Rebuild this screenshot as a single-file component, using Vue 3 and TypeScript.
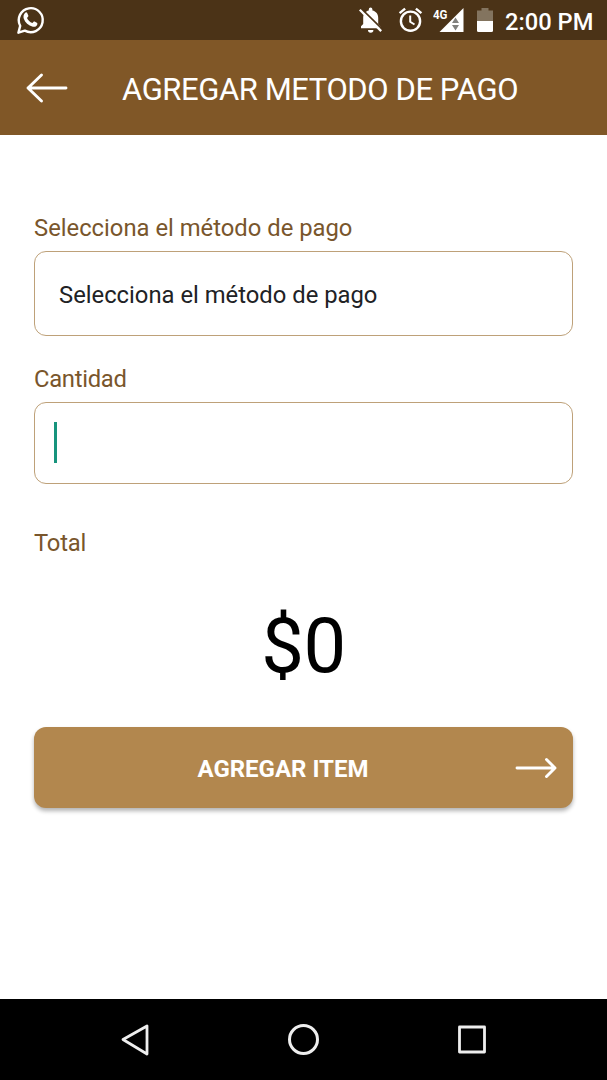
<script setup lang="ts">
import { ref } from 'vue'

const method = ref<string>('Selecciona el método de pago')
const total = ref<number>(0)
const time = '2:00 PM'
</script>

<template>
  <div class="screen">
    <div class="status">
      <svg class="whatsapp" width="30" height="32" viewBox="0 0.7 30 32" fill="none">
        <path d="M3.400 29.400 5.200 22.600A12 12 0 1 1 9.800 27.300Z" stroke="#fff" stroke-width="2.400" stroke-linejoin="round" />
        <path d="M10 9.600c.8-.8 1.800-.7 2.200.2l1.100 2.500c.2.500 0 1-1.300 2.500 1.200 2.400 2.900 4 5.300 5 1.400-1.700 1.800-1.900 2.300-1.600l2.200 1.300c.7.400.7 1.200.3 2.100-.7 1.500-2.600 2.200-4.300 1.800-4.400-1.100-7.700-4.100-9-8-.7-2.200-.2-4.500 1.200-5.800Z" fill="#fff" />
      </svg>
      <svg class="bell" width="26" height="28" viewBox="0 0 26 28">
        <path d="M3 22.300V20.300l2.200-2.200V12c0-4.200 2.300-6.800 5.600-7.500V3.300a1.800 1.800 0 0 1 3.600 0v1.200c3.600.7 5.800 3.600 5.800 7.500v6.100l2.200 2.200v2Z" fill="#fff" />
        <path d="M10 24h5.400a2.700 2.700 0 0 1-5.400 0Z" fill="#fff" />
        <path d="m2.700 2.100 22 21.500" stroke="#4b3317" stroke-width="2" />
        <path d="m1.800 3.700 21.400 21.400" stroke="#fff" stroke-width="2.300" />
      </svg>
      <svg class="alarm" width="26" height="28" viewBox="0 0 26 28" fill="none" stroke="#fff">
        <circle cx="12.500" cy="15.200" r="9.600" stroke-width="2.400" />
        <path d="m1.600 7.200 5.500-4.600M23.400 7.200l-5.500-4.600" stroke-width="2.400" />
        <path d="M12.200 9.500v6.300l4.300 2.700" stroke-width="2" />
      </svg>
      <svg class="signal" width="32" height="28" viewBox="0 0 32 28">
        <path d="M30.500 2V26H6.500Z" fill="#fff" />
        <path d="m22.500 11.500 3.500 5.500h-7ZM22.500 24.500l-3.500-5.500h7Z" fill="#81817e" />
        <text x="0" y="12.500" class="network" textLength="14.500" lengthAdjust="spacingAndGlyphs">4G</text>
      </svg>
      <svg class="battery" width="18" height="28" viewBox="0 0 18 28">
        <path d="M1 4.500h4.500V2h7v2.500H17V15H1Z" fill="#83745f" />
        <path d="M1 15h16v9.500q0 1.500-1.500 1.500h-13Q1 26 1 24.500Z" fill="#fff" />
      </svg>
      <span class="time">{{ time }}</span>
    </div>
    <header class="header">
      <svg class="back" width="44" height="32" viewBox="0 0 44 32" fill="none" stroke="#fff" stroke-width="2.900" stroke-linecap="round" stroke-linejoin="round">
        <path d="M41 16H3M16.500 3 3 16l13.500 13" />
      </svg>
      <h1 class="title">AGREGAR METODO DE PAGO</h1>
    </header>
    <main class="content">
      <div class="label">Selecciona el método de pago</div>
      <div class="field select">{{ method }}</div>
      <div class="label amount-label">Cantidad</div>
      <div class="field amount"><span class="caret"></span></div>
      <div class="label total-label">Total</div>
      <div class="total">${{ total }}</div>
      <button class="submit" type="button">
        <span class="submit-text">AGREGAR ITEM</span>
        <svg width="44" height="24" viewBox="0 0 44 24" fill="none" stroke="#fff" stroke-width="2.900" stroke-linecap="round" stroke-linejoin="round">
          <path d="M3 12h38M32.500 3.500 41 12l-8.500 8.500" />
        </svg>
      </button>
    </main>
    <nav class="nav">
      <svg width="32" height="36" viewBox="0 0 32 36" fill="none" stroke="#eee" stroke-width="2.800" stroke-linejoin="round">
        <path d="M28 4v28L4 17.500Z" />
      </svg>
      <svg width="36" height="36" viewBox="0 0 36 36" fill="none" stroke="#eee" stroke-width="3">
        <circle cx="17.500" cy="17.500" r="14" />
      </svg>
      <svg width="32" height="36" viewBox="0 0 32 36" fill="none" stroke="#eee" stroke-width="2.800" stroke-linejoin="round">
        <path d="M3.500 5h25v25h-25Z" />
      </svg>
    </nav>
  </div>
</template>

<style>
body {
  margin: 0;
}
</style>

<style scoped>
.screen {
  width: 607px;
  height: 1080px;
  display: flex;
  flex-direction: column;
  background: #fff;
  font-family: Roboto, sans-serif;
  overflow: hidden;
}
.screen svg {
  display: block;
  flex: none;
}
.status {
  height: 40px;
  flex: none;
  box-sizing: border-box;
  display: flex;
  align-items: center;
  padding-left: 15px;
  background: #4b3317;
}
.bell {
  margin-left: 313px;
}
.alarm {
  margin-left: 14px;
}
.signal {
  margin-left: 9px;
}
.network {
  font: 700 13px Roboto, sans-serif;
  fill: #fff;
}
.battery {
  margin-left: 11px;
}
.time {
  margin: 3px 0 0 11px;
  color: #fff;
  font-size: 23.700px;
  font-weight: 500;
  line-height: 30px;
  white-space: nowrap;
}
.header {
  height: 95px;
  flex: none;
  display: flex;
  align-items: center;
  padding-left: 25px;
  background: #805727;
}
.title {
  margin: 4px 0 0 53px;
  color: #fff;
  font-size: 31px;
  font-weight: 400;
  line-height: 40px;
  letter-spacing: -0.420px;
  white-space: nowrap;
}
.content {
  flex: 1;
  padding: 78px 34px 0;
}
.label {
  height: 30px;
  color: #79562c;
  font-size: 23.800px;
  line-height: 30px;
  white-space: nowrap;
}
.field {
  box-sizing: border-box;
  margin-top: 8px;
  border: 1px solid #bea179;
  border-radius: 12px;
  display: flex;
  align-items: center;
}
.select {
  height: 85px;
  padding: 2px 0 0 24px;
  color: #212225;
  font-size: 23.800px;
}
.amount-label {
  margin-top: 28px;
  letter-spacing: -0.300px;
}
.amount {
  height: 82px;
  padding: 0 0 2px 19px;
}
.caret {
  width: 3px;
  height: 41px;
  background: #17947d;
}
.total-label {
  margin-top: 44px;
  letter-spacing: -0.200px;
}
.total {
  height: 100px;
  margin-top: 38px;
  color: #000;
  font-size: 76px;
  line-height: 100px;
  letter-spacing: -0.500px;
  text-align: center;
}
.submit {
  width: 100%;
  height: 81px;
  margin: 31px 0 0;
  padding: 0 15px 0 0;
  border: 0;
  border-radius: 12px;
  display: flex;
  align-items: center;
  background: #b2874e;
  box-shadow: 0 3px 4px rgba(0, 0, 0, 0.3);
  color: #fff;
  font-family: Roboto, sans-serif;
}
.submit-text {
  flex: 1;
  padding: 3px 0 0 18px;
  font-size: 24px;
  font-weight: 700;
  line-height: 30px;
}
.nav {
  height: 81px;
  flex: none;
  box-sizing: border-box;
  display: flex;
  align-items: center;
  justify-content: space-between;
  padding: 0 119px;
  background: #000;
}
</style>
